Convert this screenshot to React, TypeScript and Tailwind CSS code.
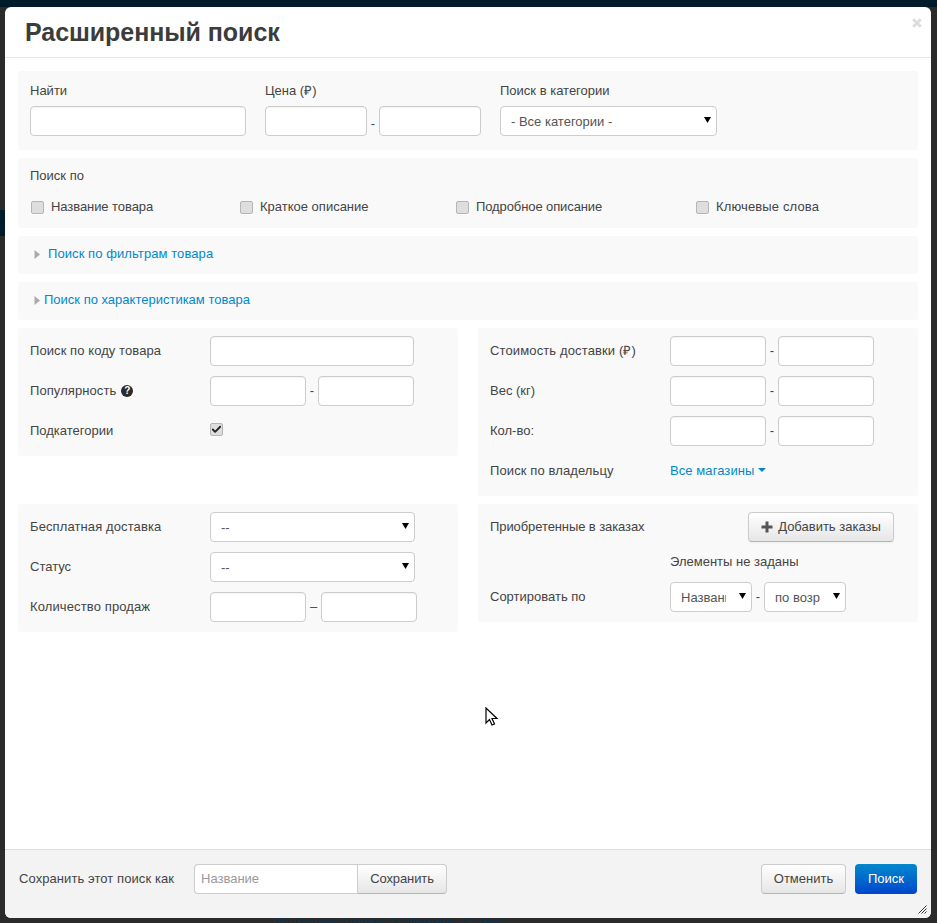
import React from 'react';
import { Check } from 'lucide-react';

const Input = ({ className = '' }: { className?: string }) => (
  <input type="text" className={`h-[30px] bg-white border border-[#ccc] rounded-[4px] shadow-[inset_0_1px_1px_rgba(0,0,0,0.05)] outline-none ${className}`} />
);

const Select = ({ className = '', value }: { className?: string; value: string }) => (
  <div className={`relative h-[30px] ${className}`}>
    <select
      defaultValue={value}
      className="appearance-none w-full h-full bg-white border border-[#ccc] rounded-[4px] pl-[10px] pr-[25px] pt-[1px] text-[13px] text-[#555] outline-none"
    >
      <option>{value}</option>
    </select>
    <svg width="7" height="6" viewBox="0 0 7 6" className="absolute right-[6px] top-[11px] pointer-events-none">
      <path d="M0 0 H7 L3.5 6 Z" fill="#000" />
    </svg>
  </div>
);

const Box = ({ checked = false }: { checked?: boolean }) => (
  <span className="w-[13px] h-[13px] shrink-0 rounded-[2px] bg-[#dedede] border border-[#b5b5b5] flex items-center justify-center shadow-[0_1px_0_#fff]">
    {checked && <Check size={11} strokeWidth={4} className="text-[#222]" />}
  </span>
);

const Row = ({ label, children, className = '' }: { label: React.ReactNode; children: React.ReactNode; className?: string }) => (
  <div className={`flex items-center h-[30px] ${className}`}>
    <div className="w-[180px] shrink-0 flex items-center">{label}</div>
    {children}
  </div>
);

const Range = () => (
  <div className="flex items-center">
    <Input className="w-[96px]" />
    <span className="w-[12px] text-center">-</span>
    <Input className="w-[96px]" />
  </div>
);

const Arrow = () => (
  <svg width="6" height="9" viewBox="0 0 6 9" className="shrink-0 text-[#aaa]">
    <path d="M0.5 0 L6 4.5 L0.5 9 Z" fill="currentColor" />
  </svg>
);

export default function App() {
  return (
    <div className="relative w-[937px] h-[923px] overflow-hidden bg-[#2b2b2b] font-['Liberation_Sans',Arial,sans-serif] text-[13px] leading-[20px] text-[#444]">
      <div className="h-[7px] bg-[#001b29]" />
      <div className="absolute left-0 top-[210px] w-[5px] h-[26px] bg-[#001b29]" />
      <div className="ml-[5px] w-[926px] h-[911px] bg-white rounded-[6px] flex flex-col relative">
        <div className="h-[51px] border-b border-[#e8e8e8] pl-[20px] flex items-center">
          <h1 className="text-[25px] tracking-[-0.05px] leading-[50px] font-bold text-[#3c3c3c]">Расширенный поиск</h1>
        </div>
        <svg width="10" height="10" viewBox="0 0 10 10" className="absolute right-[9px] top-[11px]">
          <path d="M1.2 1.2 L8.8 8.8 M8.8 1.2 L1.2 8.8" stroke="#ddd" strokeWidth="3" fill="none" />
        </svg>

        <div className="flex-1 px-[13px] pt-[13px] flex flex-col">
          {/* Top row */}
          <div className="bg-[#f9f9f9] rounded-[3px] h-[79px] px-[12px] pt-[10px] flex">
            <div className="w-[235px]">
              <div className="h-[20px] mb-[5px]">Найти</div>
              <Input className="w-[216px]" />
            </div>
            <div className="w-[235px]">
              <div className="h-[20px] mb-[5px]">Цена (₽)</div>
              <div className="flex items-center">
                <Input className="w-[102px]" />
                <span className="w-[12px] text-center pt-[6px]">-</span>
                <Input className="w-[102px]" />
              </div>
            </div>
            <div>
              <div className="h-[20px] mb-[5px]">Поиск в категории</div>
              <Select className="w-[217px]" value="- Все категории -" />
            </div>
          </div>

          {/* Search by */}
          <div className="bg-[#f9f9f9] rounded-[3px] h-[70px] mt-[8px] px-[13px] pt-[8px]">
            <div className="h-[20px] -ml-[1px]">Поиск по</div>
            <div className="flex items-center mt-[11px] h-[20px]">
              <label className="w-[209px] flex items-center gap-[7px]"><Box /><span className="tracking-[-0.07px]">Название товара</span></label>
              <label className="w-[216px] flex items-center gap-[7px]"><Box />Краткое описание</label>
              <label className="w-[240px] flex items-center gap-[7px]"><Box /><span className="tracking-[-0.1px]">Подробное описание</span></label>
              <label className="flex items-center gap-[7px]"><Box /><span className="tracking-[0.14px]">Ключевые слова</span></label>
            </div>
          </div>

          {/* Collapsed groups */}
          <div className="bg-[#f9f9f9] rounded-[3px] h-[38px] mt-[8px] pl-[16px] pb-[2px] flex items-center">
            <Arrow />
            <a className="ml-[8px] text-[#0088cc] tracking-[0.08px]">Поиск по фильтрам товара</a>
          </div>
          <div className="bg-[#f9f9f9] rounded-[3px] h-[38px] mt-[8px] pl-[16px] pb-[2px] flex items-center">
            <Arrow />
            <a className="ml-[4px] text-[#0088cc]">Поиск по характеристикам товара</a>
          </div>

          <div className="grid grid-cols-[440px_440px] gap-x-[20px] gap-y-[8px] mt-[8px] items-start">
            <div className="bg-[#f9f9f9] rounded-[3px] h-[128px] px-[12px] pt-[8px] flex flex-col gap-[10px]">
              <Row label={<span className="tracking-[0.08px]">Поиск по коду товара</span>}><Input className="w-[204px]" /></Row>
              <Row
                label={
                  <>
                    <span className="tracking-[0.08px]">Популярность</span>
                    <span className="ml-[5px] w-[12px] h-[12px] rounded-full bg-[#2b2b2b] text-white text-[10px] leading-[12px] font-bold text-center">?</span>
                  </>
                }
              >
                <Range />
              </Row>
              <Row label="Подкатегории" className="[&>span]:-mt-[4px]">
                <Box checked />
              </Row>
            </div>

            <div className="bg-[#f9f9f9] rounded-[3px] h-[168px] px-[12px] pt-[8px] flex flex-col gap-[10px]">
              <Row label={<span className="tracking-[0.13px]">Стоимость доставки (₽)</span>}><Range /></Row>
              <Row label="Вес (кг)"><Range /></Row>
              <Row label="Кол-во:"><Range /></Row>
              <Row label={<span className="tracking-[0.11px]">Поиск по владельцу</span>}>
                <a className="text-[#0088cc] flex items-center tracking-[0.08px]">
                  Все магазины
                  <svg width="8" height="4" viewBox="0 0 8 4" className="ml-[4px] -mt-[2px]">
                    <path d="M0 0 H8 L4 4 Z" fill="#0088cc" />
                  </svg>
                </a>
              </Row>
            </div>

            <div className="bg-[#f9f9f9] rounded-[3px] h-[128px] px-[12px] pt-[8px] flex flex-col gap-[10px]">
              <Row label={<span className="tracking-[0.11px]">Бесплатная доставка</span>}><Select className="w-[205px]" value="--" /></Row>
              <Row label="Статус"><Select className="w-[205px]" value="--" /></Row>
              <Row label={<span className="tracking-[0.12px]">Количество продаж</span>}>
                <Input className="w-[96px]" />
                <span className="w-[15px] text-center">–</span>
                <Input className="w-[96px]" />
              </Row>
            </div>

            <div className="bg-[#f9f9f9] rounded-[3px] h-[118px] px-[12px] pt-[8px]">
              <div className="flex items-center h-[30px]">
                <div className="flex-1 tracking-[-0.09px]">Приобретенные в заказах</div>
                <button className="w-[146px] h-[30px] mr-[12px] rounded-[4px] border border-[#ccc] border-b-[#b3b3b3] bg-gradient-to-b from-white to-[#e6e6e6] flex items-center justify-center gap-[5px] text-[#444] shadow-[0_1px_2px_rgba(0,0,0,0.05)]">
                  <svg width="12" height="12" viewBox="0 0 12 12">
                    <path d="M4.5 0.5 H7.5 V4.5 H11.5 V7.5 H7.5 V11.5 H4.5 V7.5 H0.5 V4.5 H4.5 Z" fill="#555" />
                  </svg>
                  Добавить заказы
                </button>
              </div>
              <div className="ml-[180px] mt-[10px] h-[20px]">Элементы не заданы</div>
              <Row label="Сортировать по" className="mt-[10px]">
                <Select className="w-[82px]" value="Названию" />
                <span className="w-[12px] text-center">-</span>
                <Select className="w-[82px]" value="по возрастанию" />
              </Row>
            </div>
          </div>
        </div>

        {/* Footer */}
        <div className="h-[69px] bg-[#f3f3f3] border-t border-[#ddd] rounded-b-[6px] pl-[14px] pr-[14px] pt-[14px] flex items-start relative">
          <div className="w-[175px] h-[30px] flex items-center tracking-[0.08px]">Сохранить этот поиск как</div>
          <div className="flex">
            <input
              type="text"
              placeholder="Название"
              className="w-[163px] h-[30px] bg-white border border-[#ccc] border-r-0 rounded-l-[4px] px-[6px] pb-[2px] outline-none placeholder:text-[#999]"
            />
            <button className="w-[90px] h-[30px] rounded-r-[4px] border border-[#ccc] border-b-[#b3b3b3] bg-gradient-to-b from-white to-[#e6e6e6] text-[#444] tracking-[-0.1px]">Сохранить</button>
          </div>
          <div className="ml-auto flex gap-[9px]">
            <button className="w-[85px] h-[30px] rounded-[4px] border border-[#ccc] border-b-[#b3b3b3] bg-gradient-to-b from-white to-[#e6e6e6] text-[#444]">Отменить</button>
            <button className="w-[62px] h-[30px] rounded-[4px] bg-gradient-to-b from-[#0088cc] to-[#0044cc] text-white">Поиск</button>
          </div>
          <svg width="9" height="9" viewBox="0 0 9 9" className="absolute right-[4px] bottom-[4px]">
            <path d="M8.5 0.5 L0.5 8.5 M8.5 3.5 L3.5 8.5 M8.5 6.5 L6.5 8.5" stroke="#333" strokeWidth="1" fill="none" />
          </svg>
        </div>

        {/* mouse pointer */}
        <svg width="14" height="20" viewBox="0 0 14 20" className="absolute left-[480px] top-[700px]">
          <path d="M1 1 V16 L4.5 12.5 L7 18 L9.5 17 L7 11.5 H12 Z" fill="#fff" stroke="#000" strokeWidth="1.2" />
        </svg>
      </div>
      <div className="ml-[275px] text-[14px] leading-[8px] text-[#0b3350] whitespace-nowrap">Футболка Adidas "Collegiate 72 Tee"</div>
    </div>
  );
}
